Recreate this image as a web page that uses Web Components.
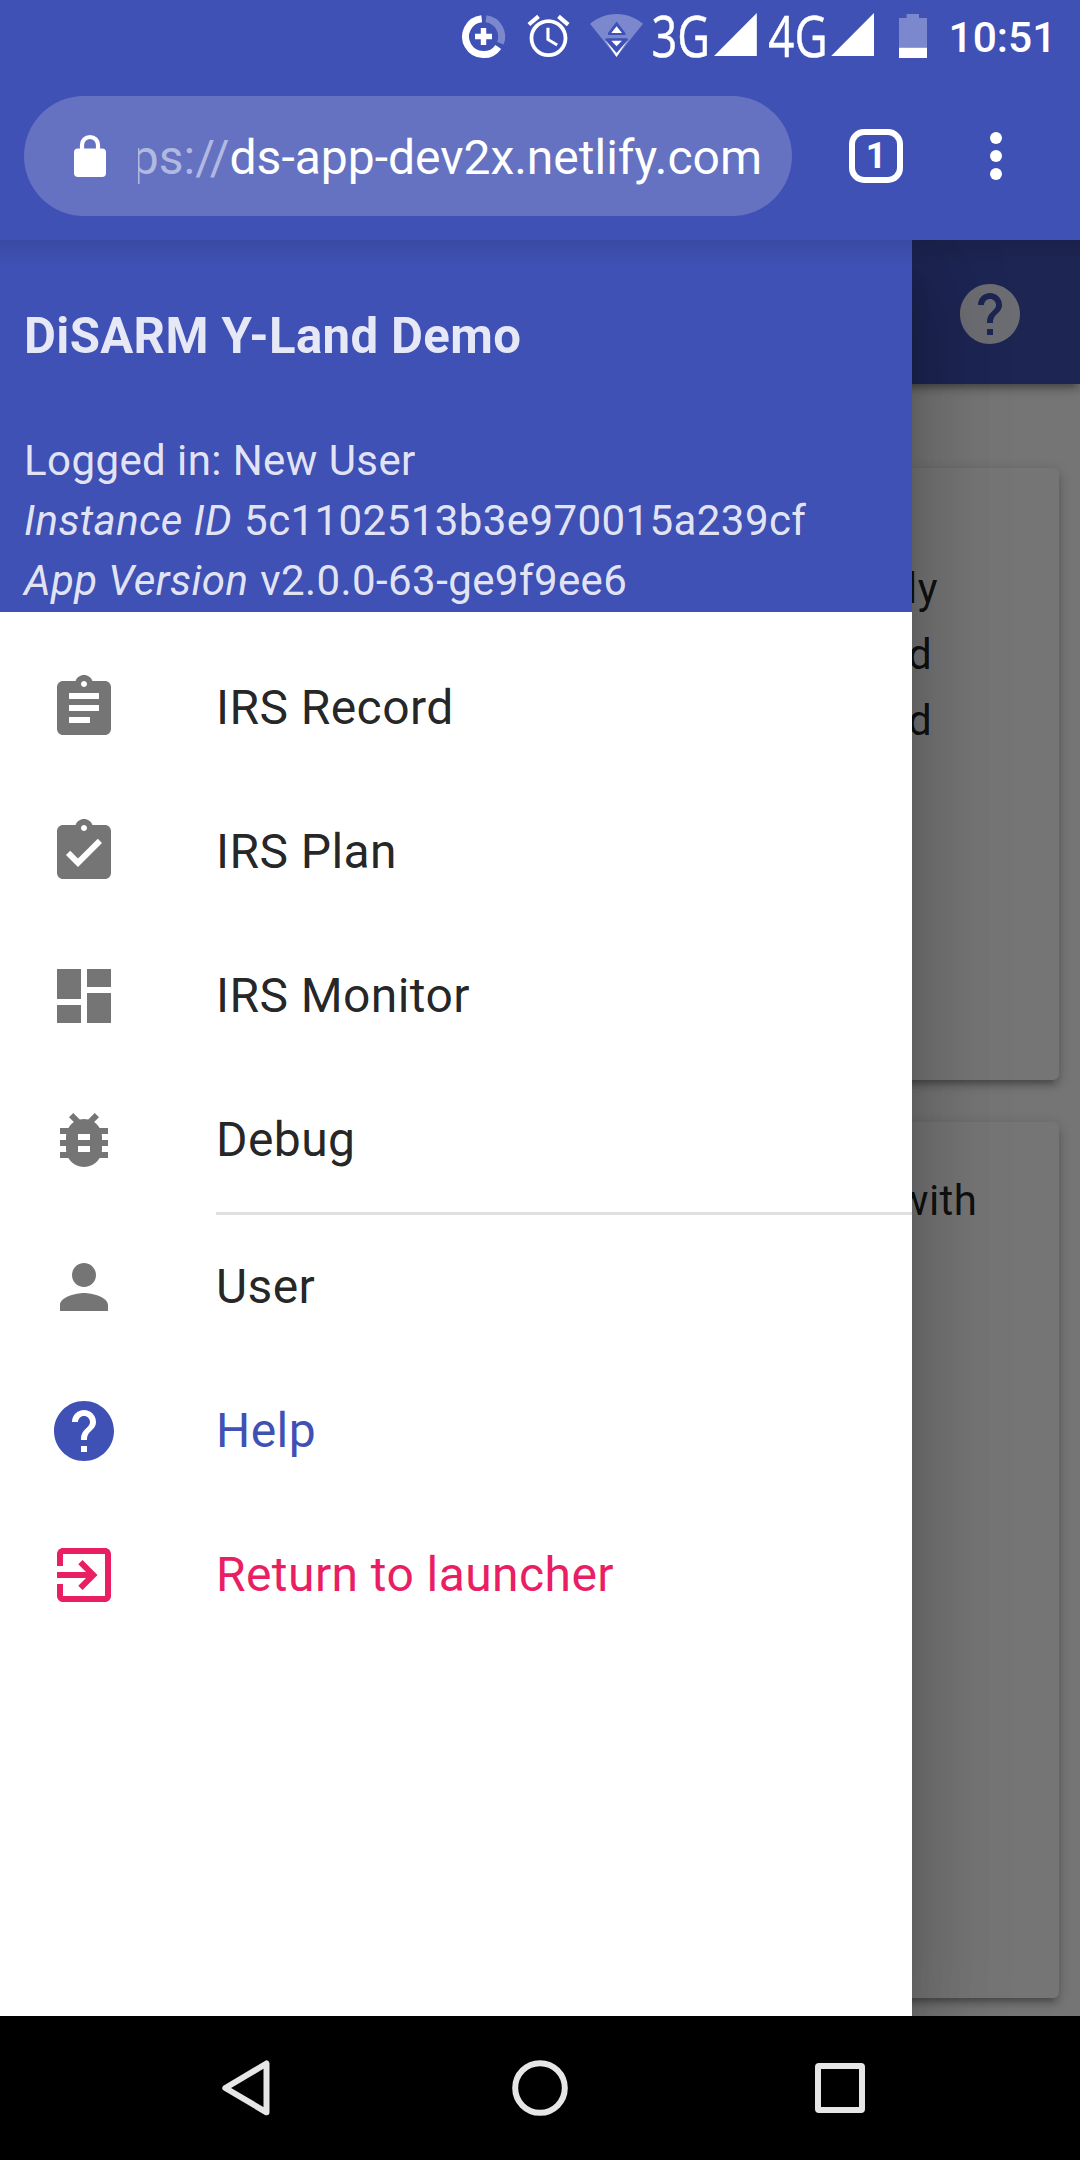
<!DOCTYPE html>
<html lang="en">
<head>
<meta charset="utf-8">
<title>DiSARM Y-Land Demo</title>
<style>
html, body { margin: 0; padding: 0; }
body { width: 1080px; height: 2160px; overflow: hidden; font-family: Roboto, "Liberation Sans", sans-serif; }
</style>
</head>
<body>
<phone-screen>
  <status-bar slot="top"></status-bar>
  <browser-bar slot="top" tabs="1"><span slot="scheme">ps://</span><span slot="host">ds-app-dev2x.netlify.com</span></browser-bar>
  <app-view>
    <app-toolbar slot="page"></app-toolbar>
    <text-card slot="page" style="margin-top:84px;height:612px">
      <text-line style="padding-left:838px">ly</text-line>
      <text-line style="padding-left:839px">d</text-line>
      <text-line style="padding-left:839px">d</text-line>
    </text-card>
    <text-card slot="page" style="margin-top:42px;height:876px;--pad:46px">
      <text-line style="padding-left:828px">with</text-line>
    </text-card>
    <nav-drawer slot="drawer">
      <drawer-header slot="header">
        <span slot="title">DiSARM Y-Land Demo</span>
        <div>Logged in: New User</div>
        <div><em style="margin-right:1px">Instance ID</em> 5c1102513b3e970015a239cf</div>
        <div><em style="margin-right:1px">App Version</em> v2.0.0-63-ge9f9ee6</div>
      </drawer-header>
      <drawer-item icon="assignment">IRS Record</drawer-item>
      <drawer-item icon="turnedIn">IRS Plan</drawer-item>
      <drawer-item icon="dashboard">IRS Monitor</drawer-item>
      <drawer-item icon="bug">Debug</drawer-item>
      <drawer-divider></drawer-divider>
      <drawer-item icon="person">User</drawer-item>
      <drawer-item icon="help" tone="primary">Help</drawer-item>
      <drawer-item icon="exit" tone="accent">Return to launcher</drawer-item>
    </nav-drawer>
  </app-view>
  <android-nav slot="bottom"></android-nav>
</phone-screen>
<script>
const ICONS = {
  assignment: 'M19 3h-4.18C14.4 1.84 13.3 1 12 1c-1.3 0-2.4.84-2.82 2H5c-1.1 0-2 .9-2 2v14c0 1.1.9 2 2 2h14c1.1 0 2-.9 2-2V5c0-1.1-.9-2-2-2zm-7 0c.55 0 1 .45 1 1s-.45 1-1 1-1-.45-1-1 .45-1 1-1zm2 14H7v-2h7v2zm3-4H7v-2h10v2zm0-4H7V7h10v2z',
  turnedIn: 'M19 3h-4.18C14.4 1.84 13.3 1 12 1c-1.3 0-2.4.84-2.82 2H5c-1.1 0-2 .9-2 2v14c0 1.1.9 2 2 2h14c1.1 0 2-.9 2-2V5c0-1.1-.9-2-2-2zm-7 0c.55 0 1 .45 1 1s-.45 1-1 1-1-.45-1-1 .45-1 1-1zm-2 14l-4-4 1.41-1.41L10 14.17l6.59-6.59L18 9l-8 8z',
  dashboard: 'M3 13h8V3H3v10zm0 8h8v-6H3v6zm10 0h8V11h-8v10zm0-18v6h8V3h-8z',
  bug: 'M20 8h-2.81c-.45-.78-1.07-1.45-1.82-1.96L17 4.41 15.59 3l-2.17 2.17C12.96 5.06 12.49 5 12 5c-.49 0-.96.06-1.41.17L8.41 3 7 4.41l1.62 1.63C7.88 6.55 7.26 7.22 6.81 8H4v2h2.09c-.05.33-.09.66-.09 1v1H4v2h2v1c0 .34.04.67.09 1H4v2h2.81c1.04 1.79 2.97 3 5.19 3s4.15-1.21 5.19-3H20v-2h-2.09c.05-.33.09-.66.09-1v-1h2v-2h-2v-1c0-.34-.04-.67-.09-1H20V8zm-6 8h-4v-2h4v2zm0-4h-4v-2h4v2z',
  person: 'M12 12c2.21 0 4-1.79 4-4s-1.79-4-4-4-4 1.79-4 4 1.79 4 4 4zm0 2c-2.67 0-8 1.34-8 4v2h16v-2c0-2.66-5.33-4-8-4z',
  help: 'M12 2C6.48 2 2 6.48 2 12s4.48 10 10 10 10-4.48 10-10S17.52 2 12 2zm1 17h-2v-2h2v2zm2.07-7.75l-.9.92C13.45 12.9 13 13.5 13 15h-2v-.5c0-1.1.45-2.1 1.17-2.83l1.24-1.26c.37-.36.59-.86.59-1.41 0-1.1-.9-2-2-2s-2 .9-2 2H8c0-2.21 1.79-4 4-4s4 1.79 4 4c0 .88-.36 1.68-.93 2.25z',
  exit: 'M10.09 15.59L11.5 17l5-5-5-5-1.41 1.41L12.67 11H3v2h9.67l-2.58 2.59zM19 3H5c-1.11 0-2 .9-2 2v4h2V5h14v14H5v-4H3v4c0 1.1.89 2 2 2h14c1.1 0 2-.9 2-2V5c0-1.1-.9-2-2-2z'
};
const icon = n => `<svg viewBox="0 0 24 24" width="72" height="72" fill="currentColor"><path d="${ICONS[n]}"/></svg>`;

function define(name, render) {
  customElements.define(name, class extends HTMLElement {
    constructor() {
      super();
      const root = this.attachShadow({ mode: 'open' });
      const t = document.createElement('template');
      t.innerHTML = render(this);
      root.append(t.content.cloneNode(true));
    }
  });
}

define('phone-screen', () => `
<style>
:host { display: flex; flex-direction: column; width: 1080px; height: 2160px; overflow: hidden; background: #000; }
.view { flex: 1; min-height: 0; display: flex; }
</style>
<slot name="top"></slot><div class="view"><slot></slot></div><slot name="bottom"></slot>`);

/* Each glyph's viewBox uses the bar's own x axis, so neighbours share one grid. */
define('status-bar', () => `
<style>
:host { display: flex; flex: none; height: 72px; padding-left: 460px; background: #3f51b5; color: #fff; }
svg { display: block; flex: none; height: 72px; fill: #fff; overflow: visible; }
.clock { margin-left: 19.5px; font-weight: 500; font-size: 42.5px; line-height: 75px; }
text { font-family: "Open Sans", "Noto Sans", sans-serif; font-size: 56px; stroke: #fff; stroke-width: .5px; }
</style>
<svg width="60" viewBox="460 0 60 72">
  <g fill="none" stroke="#fff" stroke-width="7">
    <path d="M486 18.7A18 18 0 0 1 500.4 43.2" stroke="#7c88cd"/>
    <path d="M498.3 46.9A18 18 0 1 1 481.7 18.7"/>
    <path d="M483.5 28v17M475 36.5h17" stroke-width="5.4"/>
  </g>
</svg>
<svg width="62" viewBox="520 0 62 72">
  <g transform="translate(523.3 10.9) scale(2.1)"><path d="M22 5.72l-4.6-3.86-1.29 1.53 4.6 3.86L22 5.72zM7.88 3.39L6.6 1.86 2 5.71l1.29 1.53 4.59-3.85zM12.5 8H11v6l4.75 2.85.75-1.23-4-2.37V8zM12 4c-4.97 0-9 4.03-9 9s4.02 9 9 9c4.97 0 9-4.03 9-9s-4.03-9-9-9zm0 16.2c-3.98 0-7.2-3.22-7.2-7.2s3.22-7.2 7.2-7.2 7.2 3.22 7.2 7.2-3.22 7.2-7.2 7.2z"/></g>
</svg>
<svg width="66" viewBox="582 0 66 72">
  <path d="M590 23.7C597 18 606 14 616.5 14S636 18 643 23.7L616.5 57z" fill="#7c88cd"/>
  <path d="M605.5 40.5L616.5 57L627.5 40.5z"/>
  <path d="M616.6 21.5L608 33v2h17.4v-2zM605.5 38.3h22.2v1.9l-11.1 12.8l-11.1-12.8z" fill="#3f51b5"/>
  <path d="M616.6 26.2L621.9 33h-10.6zM616.6 46.3L621.9 40.8h-10.6z"/>
</svg>
<svg width="64" viewBox="648 0 64 72"><text transform="translate(651.4 57) scale(.806 1)">3G</text></svg>
<svg width="50" viewBox="712 0 50 72"><path d="M714 56L756.8 13v43z"/></svg>
<svg width="66" viewBox="762 0 66 72"><text transform="translate(768.3 57) scale(.815 1)">4G</text></svg>
<svg width="50" viewBox="828 0 50 72"><path d="M831.2 56L874 13v43z"/></svg>
<svg width="51" viewBox="878 0 51 72"><path d="M899 18h7.5v-4H919v4h8v30h-28z" fill="#7c88cd"/><path d="M899 47.8h28V58h-28z"/></svg>
<span class="clock">10:51</span>`);

define('browser-bar', el => `
<style>
:host { display: flex; flex: none; align-items: center; box-sizing: border-box; height: 168px; padding: 0 78px 0 24px; background: #3f51b5; color: #fff; }
.pill { display: flex; align-items: center; width: 768px; height: 120px; border-radius: 60px; background: #6572c2; }
.lock { margin-left: 50px; }
.url { display: flex; justify-content: flex-end; margin-left: 32px; width: 624px; overflow: hidden; white-space: nowrap; font-size: 48px; line-height: 72px; padding-top: 3px; }
.scheme { color: #b2b9e1; }
.tab { box-sizing: border-box; display: flex; justify-content: center; width: 54px; height: 54px; margin-left: 57px; border: 6px solid #fff; border-radius: 15px; font-weight: 700; font-size: 36px; line-height: 43px; }
.more { margin-left: auto; }
svg { display: block; flex: none; }
</style>
<div class="pill">
  <svg class="lock" width="32" height="44" viewBox="0 0 32 44"><rect y="14.5" width="32" height="28.5" rx="4" fill="#fff"/><path d="M8 16v-5a8 8 0 0 1 16 0v5" fill="none" stroke="#fff" stroke-width="4.2"/></svg>
  <div class="url"><span class="scheme"><slot name="scheme"></slot></span><slot name="host"></slot></div>
</div>
<div class="tab">${el.getAttribute('tabs')}</div>
<svg class="more" width="12" height="48" viewBox="0 0 12 48" fill="#fff"><circle cx="6" cy="6" r="6"/><circle cx="6" cy="24" r="6"/><circle cx="6" cy="42" r="6"/></svg>`);

define('app-view', () => `
<style>
:host { display: block; position: relative; flex: 1; overflow: hidden; background: #fff; letter-spacing: .42px; }
.page { display: flex; flex-direction: column; height: 100%; }
.scrim { position: absolute; inset: 0; background: rgba(0,0,0,.54); }
.drawer { position: absolute; inset: 0 auto 0 0; width: 912px; display: flex; }
.shade { position: absolute; inset: 0 0 auto 0; height: 26px; background: linear-gradient(rgba(0,0,0,.1), rgba(0,0,0,0)); }
</style>
<div class="page"><slot name="page"></slot></div>
<div class="scrim"></div>
<div class="drawer"><slot name="drawer"></slot></div>
<div class="shade"></div>`);

define('app-toolbar', () => `
<style>
:host { display: flex; flex: none; box-sizing: border-box; height: 144px; padding: 38px 54px 0 0; justify-content: flex-end; background: #3f51b5; color: #eceef8;
  box-shadow: 0 3px 15px rgba(0,0,0,.2), 0 6px 6px rgba(0,0,0,.14), 0 9px 3px -6px rgba(0,0,0,.12); }
</style>${icon('help')}`);

define('text-card', () => `
<style>
:host { display: flex; flex: none; flex-direction: column; box-sizing: border-box; margin: 0 21px; padding-top: var(--pad, 88px); border-radius: 6px; background: #fff; color: rgba(0,0,0,.87);
  box-shadow: 0 3px 15px rgba(0,0,0,.2), 0 6px 6px rgba(0,0,0,.14), 0 9px 3px -6px rgba(0,0,0,.12); }
</style><slot></slot>`);

define('text-line', () => `
<style>
:host { display: block; margin-left: 48px; font-size: 42px; line-height: 66px; white-space: nowrap; }
</style><slot></slot>`);

define('nav-drawer', () => `
<style>
:host { display: flex; flex-direction: column; width: 912px; background: #fff; color: rgba(0,0,0,.87);
  box-shadow: 0 24px 30px -15px rgba(0,0,0,.2), 0 48px 72px 6px rgba(0,0,0,.14), 0 18px 90px 15px rgba(0,0,0,.12); }
.list { display: flex; flex-direction: column; padding: 24px 0; }
</style>
<slot name="header"></slot><div class="list"><slot></slot></div>`);

define('drawer-header', () => `
<style>
:host { display: block; padding: 66px 24px 1px; background: #3f51b5; color: rgba(255,255,255,.87); font-size: 42px; line-height: 60px; white-space: nowrap; }
h3 { margin: 0 0 65px; font-size: 49.14px; font-weight: 700; line-height: 60px; letter-spacing: .36px; }
</style>
<h3><slot name="title"></slot></h3><slot></slot>`);

define('drawer-item', el => `
<style>
:host { display: flex; flex: none; align-items: center; height: 144px; padding-left: 48px; gap: 96px; font-size: 48px; line-height: 72px; }
:host([tone=primary]) { color: #3f51b5; }
:host([tone=accent]) { color: #e91e63; }
.icon { display: flex; color: #757575; }
:host([tone]) .icon { color: inherit; }
</style>
<span class="icon">${icon(el.getAttribute('icon'))}</span><span><slot></slot></span>`);

define('drawer-divider', () => `
<style>:host { display: block; flex: none; height: 3px; margin-left: 216px; background: #e0e0e0; }</style>`);

define('android-nav', () => `
<style>
:host { display: flex; flex: none; align-items: center; justify-content: center; gap: 240px; height: 144px; background: #000; }
svg { display: block; fill: none; stroke: #e6e6e6; stroke-width: 6; stroke-linejoin: round; }
</style>
<svg width="60" height="60" viewBox="210 2058 60 60"><path d="M266.5 2063.5V2112.3L225.3 2088z"/></svg>
<svg width="60" height="60" viewBox="510 2058 60 60"><circle cx="540" cy="2088" r="24.8"/></svg>
<svg width="60" height="60" viewBox="810 2058 60 60"><rect x="818" y="2066" width="44" height="44" rx="1"/></svg>`);
</script>
</body>
</html>
